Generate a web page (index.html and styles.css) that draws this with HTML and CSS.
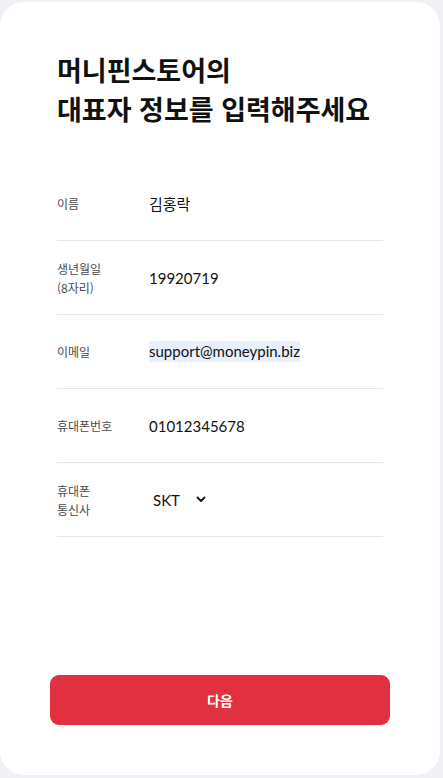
FILE: index.html
```html
<!DOCTYPE html>
<html lang="ko">
<head>
<meta charset="utf-8">
<link rel="stylesheet" href="styles.css">
</head>
<body>
<div class="card">
  <h1 class="title">머니핀스토어의<br>대표자 정보를 입력해주세요</h1>
  <div class="form">
    <div class="row">
      <div class="label">이름</div>
      <div class="value">김홍락</div>
    </div>
    <div class="row">
      <div class="label">생년월일<br>(8자리)</div>
      <div class="value">19920719</div>
    </div>
    <div class="row">
      <div class="label">이메일</div>
      <div class="value"><span class="autofill">support@moneypin.biz</span></div>
    </div>
    <div class="row">
      <div class="label">휴대폰번호</div>
      <div class="value">01012345678</div>
    </div>
    <div class="row">
      <div class="label">휴대폰<br>통신사</div>
      <div class="value select">SKT
        <svg class="chev" width="10" height="7" viewBox="0 0 10 7"><path d="M1.5 1.5 L5 5 L8.5 1.5" fill="none" stroke="#111" stroke-width="1.8" stroke-linecap="round" stroke-linejoin="round"/></svg>
      </div>
    </div>
  </div>
  <button class="next">다음</button>
</div>
</body>
</html>
```
FILE: styles.css
```css
html, body {
  margin: 0;
  padding: 0;
  background: #f0f0f5;
}
body {
  font-family: "Noto Sans CJK KR", "Noto Sans", sans-serif;
  color: #111;
}
.card {
  box-sizing: border-box;
  width: 440px;
  height: 773px;
  margin-top: 2px;
  background: #fff;
  border-radius: 24px;
  padding: 48px 57px 50px 57px;
  display: flex;
  flex-direction: column;
}
.title {
  margin: 0;
  font-size: 27px;
  font-weight: 700;
  line-height: 39px;
  letter-spacing: 0;
  color: #111;
}
.form {
  margin-top: 39px;
  display: flex;
  flex-direction: column;
}
.row {
  height: 73px;
  border-bottom: 1px solid #e6e6ea;
  display: flex;
  align-items: center;
}
.label {
  width: 92px;
  flex: none;
  font-size: 12px;
  line-height: 19px;
  color: #4a4a4a;
}
.value {
  font-family: Lato, "Noto Sans CJK KR", sans-serif;
  font-size: 15px;
  color: #111;
  display: flex;
  align-items: center;
}
.autofill {
  display: block;
  width: 151px;
  height: 21px;
  line-height: 21px;
  background: #e8f0fe;
  white-space: nowrap;
  overflow: hidden;
}
.select {
  padding-left: 4px;
}
.chev {
  margin-left: 16px;
}
.next {
  margin: auto -7px 0 -7px;
  height: 50px;
  border: none;
  border-radius: 9px;
  background: #e1303f;
  color: #fff;
  font-family: "Noto Sans CJK KR", sans-serif;
  font-size: 14px;
  font-weight: 700;
}
```
